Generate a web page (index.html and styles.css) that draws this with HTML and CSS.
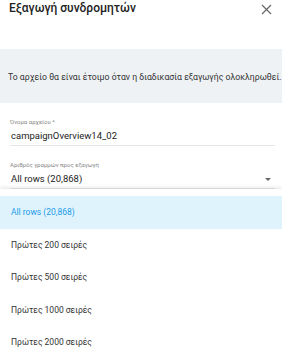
FILE: index.html
```html
<!DOCTYPE html>
<html lang="el">
<head>
    <meta charset="UTF-8">
    <meta name="viewport" content="width=device-width, initial-scale=1.0">
    <title>Εξαγωγή συνδρομητών</title>
    <link rel="stylesheet" href="styles.css">
</head>
<body>
    <div class="dialog">
        <div class="header">
            <h2>Εξαγωγή συνδρομητών</h2>
            <svg class="close" width="11" height="11" viewBox="0 0 11 11">
                <path d="M1 1L10 10M10 1L1 10" stroke="#666" stroke-width="1.2" fill="none"/>
            </svg>
        </div>
        <div class="info">
            Το αρχείο θα είναι έτοιμο όταν η διαδικασία εξαγωγής ολοκληρωθεί.
        </div>
        <div class="form">
            <div class="field">
                <label>Όνομα αρχείου *</label>
                <div class="value">campaignOverview14_02</div>
            </div>
            <div class="field">
                <label>Αριθμός γραμμών προς εξαγωγή</label>
                <div class="value select">
                    <span>All rows (20,868)</span>
                    <span class="arrow"></span>
                </div>
            </div>
        </div>
        <ul class="menu">
            <li class="selected">All rows (20,868)</li>
            <li>Πρώτες 200 σειρές</li>
            <li>Πρώτες 500 σειρές</li>
            <li>Πρώτες 1000 σειρές</li>
            <li>Πρώτες 2000 σειρές</li>
        </ul>
    </div>
</body>
</html>
```
FILE: styles.css
```css
body {
    margin: 0;
    font-family: Roboto, "Noto Sans", sans-serif;
    background: white;
    color: #333;
}
.dialog {
    width: 282px;
    height: 356px;
    overflow: hidden;
}
.header {
    display: flex;
    justify-content: space-between;
    align-items: flex-start;
    height: 49px;
    padding: 0 10px 0 9px;
    box-sizing: border-box;
}
.header h2 {
    margin: 0;
    font-size: 12px;
    font-weight: 500;
    color: #222;
    line-height: 16px;
}
.close {
    margin-top: 4px;
}
.info {
    background: #eef2f5;
    height: 54px;
    display: flex;
    align-items: center;
    padding: 1px 0 0 8px;
    box-sizing: border-box;
    font-size: 8.7px;
    color: #333;
    white-space: nowrap;
}
.form {
    padding: 15px 7px 0 10px;
}
.field {
    border-bottom: 1px solid #e6e6e6;
    margin-bottom: 15px;
}
.field:last-child {
    margin-bottom: 0;
}
label {
    display: block;
    font-size: 6px;
    color: #888;
    line-height: 8px;
}
.value {
    font-size: 9.5px;
    color: #222;
    line-height: 14px;
    padding: 3px 0 2px 1px;
}
.select {
    display: flex;
    justify-content: space-between;
    align-items: center;
}
.arrow {
    width: 0;
    height: 0;
    border-left: 3px solid transparent;
    border-right: 3px solid transparent;
    border-top: 3px solid #666;
    margin-right: 4px;
}
.menu {
    list-style: none;
    margin: 0;
    padding: 7px 0 0;
    box-shadow: 0 -2px 3px rgba(0,0,0,0.08);
    height: 200px;
}
.menu li {
    height: 32.5px;
    display: flex;
    align-items: center;
    padding-left: 11px;
    font-size: 8.5px;
    color: #333;
}
.menu li.selected {
    background: #dff3fd;
    color: #1e9be8;
}
```
